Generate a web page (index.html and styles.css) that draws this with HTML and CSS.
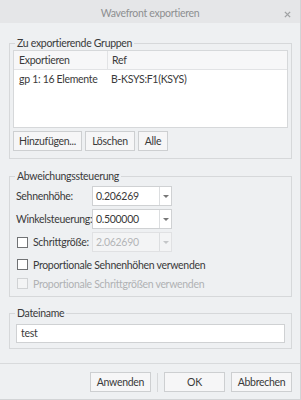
FILE: index.html
```html
<!DOCTYPE html>
<html lang="de">

<head>
    <meta charset="UTF-8">
    <meta name="viewport" content="width=device-width, initial-scale=1.0">
    <title>Wavefront exportieren</title>
    <link rel="stylesheet" href="styles.css">
</head>

<body>
    <div class="dialog">
        <div class="titlebar">
            <span class="title">Wavefront exportieren</span>
            <svg class="close" viewBox="0 0 8 8">
                <path d="M1 1L7 7M7 1L1 7" stroke="currentColor" stroke-width="1.6" fill="none"></path>
            </svg>
        </div>

        <div class="content">
            <fieldset class="group groups">
                <legend>Zu exportierende Gruppen</legend>
                <div class="table">
                    <div class="thead">
                        <div class="col c1">Exportieren</div>
                        <div class="col c2">Ref</div>
                    </div>
                    <div class="row">
                        <div class="col c1">gp 1: 16 Elemente</div>
                        <div class="col c2">B-KSYS:F1(KSYS)</div>
                    </div>
                </div>
                <div class="btns">
                    <button class="btn add">Hinzufügen...</button>
                    <button class="btn del">Löschen</button>
                    <button class="btn all">Alle</button>
                </div>
            </fieldset>

            <fieldset class="group deviation">
                <legend>Abweichungssteuerung</legend>
                <div class="field">
                    <span class="label">Sehnenhöhe:</span>
                    <div class="combo"><span class="val">0.206269</span><span class="arrow"></span></div>
                </div>
                <div class="field">
                    <span class="label">Winkelsteuerung:</span>
                    <div class="combo"><span class="val">0.500000</span><span class="arrow"></span></div>
                </div>
                <div class="field">
                    <span class="label check"><span class="box"></span>Schrittgröße:</span>
                    <div class="combo off"><span class="val">2.062690</span><span class="arrow"></span></div>
                </div>
                <div class="option"><span class="box"></span>Proportionale Sehnenhöhen verwenden</div>
                <div class="option off"><span class="box"></span>Proportionale Schrittgrößen verwenden</div>
            </fieldset>

            <fieldset class="group file">
                <legend>Dateiname</legend>
                <div class="text-input">test</div>
            </fieldset>
        </div>

        <div class="footer">
            <button class="btn wide">Anwenden</button>
            <div class="sep"></div>
            <button class="btn wide">OK</button>
            <button class="btn wide">Abbrechen</button>
        </div>
    </div>
</body>

</html>
```

FILE: styles.css
```css
body {
    margin: 0;
    font-family: 'Lato', sans-serif;
    font-size: 10.5px;
    letter-spacing: -0.3px;
    color: #3a3a3a;
}

.dialog {
    width: 300px;
    height: 399px;
    background: #eef0f2;
    border-right: 1px solid #d2d4d6;
    border-bottom: 1px solid #d2d4d6;
    display: flex;
    flex-direction: column;
}

.titlebar {
    height: 23px;
    background: #e5e6e8;
    display: flex;
    align-items: center;
    justify-content: center;
    position: relative;
}

.title {
    color: #8d8f91;
    font-size: 10.5px;
    margin-top: 3px;
}

.close {
    position: absolute;
    right: 9px;
    top: 11px;
    width: 7px;
    height: 7px;
    color: #a0a2a4;
}

.content {
    flex: 1;
    padding: 13px 8px 0 9px;
}

.group {
    margin: 0;
    padding: 0 3px 7px;
    border: 1px solid #d6d8da;
}

.group legend {
    padding: 0 2px;
    margin-left: 2px;
    line-height: 14px;
    color: #3a3a3a;
}

/* table */
.table {
    height: 76px;
    background: #fff;
    border: 1px solid #d6d8da;
}

.thead,
.row {
    display: flex;
    height: 18px;
    align-items: center;
}

.thead {
    background: #f7f7f8;
    border-bottom: 1px solid #e2e3e5;
}

.col.c1 {
    width: 88px;
    padding-left: 5px;
    white-space: nowrap;
}

.thead .c1 {
    border-right: 1px solid #e2e3e5;
    height: 18px;
    line-height: 18px;
}

.col.c2 {
    padding-left: 4px;
}

.btns {
    display: flex;
    gap: 3px;
    margin-top: 3px;
}

.btn {
    font: inherit;
    letter-spacing: inherit;
    color: #3a3a3a;
    height: 20px;
    padding: 0;
    background: #f6f6f7;
    border: 1px solid #cdcfd1;
    border-radius: 0;
}

.btn.add {
    width: 69px;
}

.btn.del {
    width: 50px;
}

.btn.all {
    width: 30px;
}

/* deviation */
.deviation {
    margin-top: 10px;
    padding-top: 3px;
    padding-bottom: 3px;
}

.field {
    display: flex;
    align-items: center;
    height: 20px;
    margin-bottom: 3px;
}

.label {
    width: 76px;
    padding-left: 3px;
    display: flex;
    align-items: center;
    white-space: nowrap;
}

.combo {
    width: 78px;
    height: 18px;
    border: 1px solid #cfd1d3;
    background: #fff;
    display: flex;
}

.combo .val {
    flex: 1;
    padding-left: 3px;
    line-height: 18px;
}

.combo .arrow {
    width: 11px;
    border-left: 1px solid #dcdee0;
    display: flex;
    align-items: center;
    justify-content: center;
}

.combo .arrow::after {
    content: "";
    border-left: 3px solid transparent;
    border-right: 3px solid transparent;
    border-top: 3px solid #777;
}

.combo.off {
    background: #f3f4f5;
    border-color: #e0e1e3;
    color: #b4b6b8;
}

.combo.off .arrow::after {
    border-top-color: #c4c6c8;
}

.box {
    width: 9px;
    height: 9px;
    border: 1px solid #707274;
    background: #fff;
    margin-right: 5px;
    flex: none;
}

.option {
    display: flex;
    align-items: center;
    height: 19px;
    padding-left: 4px;
}

.field + .option {
    margin-top: 2px;
}

.option.off {
    color: #b0b2b4;
}

.option.off .box {
    border-color: #d0d2d4;
    background: #f3f4f5;
}

.label.check {
    padding-left: 4px;
    width: 75px;
}

/* filename */
.file {
    margin-top: 9px;
    padding-top: 4px;
    padding-bottom: 5px;
}

.text-input {
    margin: 0 3px;
    height: 17px;
    line-height: 17px;
    padding-left: 4px;
    background: #fff;
    border: 1px solid #cfd1d3;
}

/* footer */
.footer {
    border-top: 1px solid #d8dadc;
    padding: 8px 8px 7px;
    display: flex;
    justify-content: flex-end;
    align-items: center;
    gap: 6px;
}

.btn.wide {
    width: 61px;
}

.sep {
    width: 1px;
    height: 19px;
    background: #d6d8da;
}
```
